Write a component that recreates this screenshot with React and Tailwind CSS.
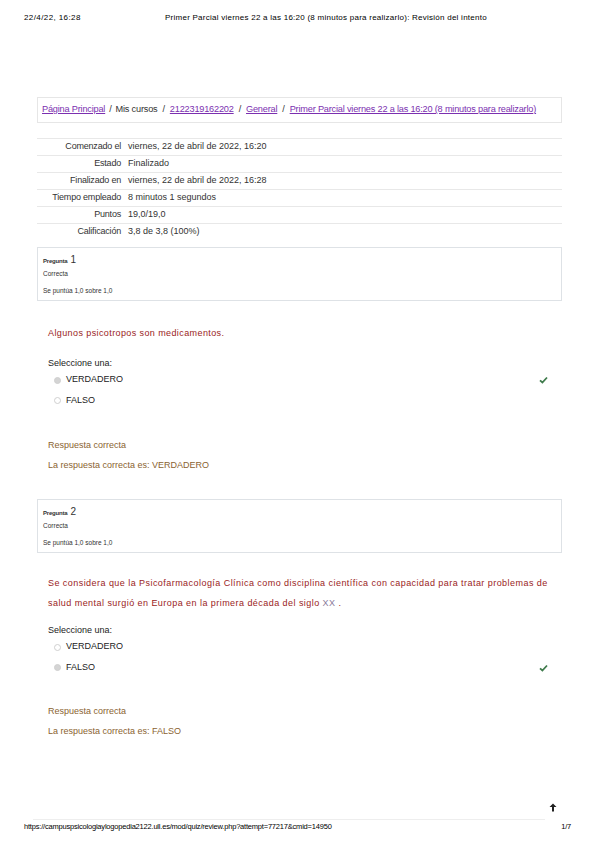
const font = { fontFamily: '"Liberation Sans", Arial, sans-serif' };

function InfoBox({ num }) {
  return (
    <div className="mx-[37px] w-[525px] h-[54px] border border-[#dee2e6] px-[5px] pt-[4px] text-[#333]">
      <div className="flex items-baseline h-[14px]">
        <span className="text-[6px] font-bold tracking-[-0.2px]">Pregunta</span>
        <span className="text-[10px] ml-[3px]">{num}</span>
      </div>
      <div className="text-[6.5px] h-[15px] leading-[15px]">Correcta</div>
      <div className="text-[6.5px] mt-[3px] h-[14px] leading-[14px]">Se puntúa 1,0 sobre 1,0</div>
    </div>
  );
}

function Check() {
  return (
    <svg width="9" height="8" viewBox="0 0 9 8" className="absolute left-[485px]">
      <path d="M1 4.3 L3.4 6.5 L8 1.5" stroke="#3f7b4c" strokeWidth="1.8" fill="none" />
    </svg>
  );
}

function Radio({ checked }) {
  return (
    <span
      className={
        "inline-block w-[7px] h-[7px] rounded-full border border-[#d0d0d0] mr-[5px] " +
        (checked ? "bg-[#d4d4d4]" : "bg-white")
      }
    />
  );
}

function Options({ correct }) {
  return (
    <div className="ml-[48px] text-[9px] text-[#222]">
      <div className="h-[14px] leading-[14px]">Seleccione una:</div>
      <div className="relative flex items-center h-[20px] ml-[6px] w-[514px]">
        <Radio checked={correct === "V"} />
        <span>VERDADERO</span>
        {correct === "V" && <Check />}
      </div>
      <div className="relative flex items-center h-[21px] ml-[6px] w-[514px]">
        <Radio checked={correct === "F"} />
        <span>FALSO</span>
        {correct === "F" && <Check />}
      </div>
    </div>
  );
}

function Feedback({ answer }) {
  return (
    <div className="ml-[48px] text-[9px] text-[#8a6330]">
      <div className="h-[20px] leading-[20px]">Respuesta correcta</div>
      <div className="h-[20px] leading-[20px]">La respuesta correcta es: {answer}</div>
    </div>
  );
}

const rows = [
  ["Comenzado el", "viernes, 22 de abril de 2022, 16:20"],
  ["Estado", "Finalizado"],
  ["Finalizado en", "viernes, 22 de abril de 2022, 16:28"],
  ["Tiempo empleado", "8 minutos 1 segundos"],
  ["Puntos", "19,0/19,0"],
  ["Calificación", "3,8 de 3,8 (100%)"],
];

export default function App() {
  return (
    <div className="relative w-[599px] h-[848px] bg-white overflow-hidden" style={font}>
      {/* print header */}
      <div className="flex items-center h-[12px] mt-[12px] text-[8px] text-black whitespace-nowrap">
        <span className="ml-[24px] w-[141px] tracking-[0.4px]">22/4/22, 16:28</span>
        <span className="tracking-[0.25px]">Primer Parcial viernes 22 a las 16:20 (8 minutos para realizarlo): Revisión del intento</span>
      </div>

      {/* breadcrumb */}
      <div className="mt-[73px] mx-[37px] w-[525px] h-[26px] border border-[#e6e6e6] flex items-center px-[4px] text-[9.2px] text-[#333] tracking-[-0.2px] whitespace-nowrap">
        <a className="text-[#7b2fb0] underline">Página Principal</a>
        <span className="mx-[4px]">/</span>
        <span>Mis cursos</span>
        <span className="mx-[5px]">/</span>
        <a className="text-[#7b2fb0] underline">2122319162202</a>
        <span className="mx-[5px]">/</span>
        <a className="text-[#7b2fb0] underline">General</a>
        <span className="mx-[5px]">/</span>
        <a className="text-[#7b2fb0] underline">Primer Parcial viernes 22 a las 16:20 (8 minutos para realizarlo)</a>
      </div>

      {/* summary table */}
      <div className="mt-[15px] mx-[37px] w-[525px] text-[9px] text-[#333]">
        {rows.map(([k, v]) => (
          <div key={k} className="flex h-[17px] items-center border-t border-[#e8e8e8]">
            <div className="w-[84px] text-right tracking-[-0.2px]">{k}</div>
            <div className="ml-[7px]">{v}</div>
          </div>
        ))}
      </div>

      <div className="mt-[7px]">
        <InfoBox num="1" />
      </div>

      <div className="ml-[48px] mt-[25px] h-[14px] leading-[14px] text-[9px] text-[#9a1c1c] tracking-[0.4px]">
        Algunos psicotropos son medicamentos.
      </div>

      <div className="mt-[16px]">
        <Options correct="V" />
      </div>

      <div className="mt-[24px]">
        <Feedback answer="VERDADERO" />
      </div>

      <div className="mt-[24px]">
        <InfoBox num="2" />
      </div>

      <div className="ml-[48px] mt-[20px] w-[505px] text-[9px] leading-[20px] text-[#9a1c1c] tracking-[0.45px]">
        Se considera que la Psicofarmacología Clínica como disciplina científica con capacidad para tratar problemas de salud mental surgió en Europa en la primera década del siglo <span className="text-[#8a7a9a]">XX</span> .
      </div>

      <div className="mt-[10px]">
        <Options correct="F" />
      </div>

      <div className="mt-[23px]">
        <Feedback answer="FALSO" />
      </div>

      {/* back to top arrow */}
      <svg width="8" height="9" viewBox="0 0 8 9" className="absolute left-[549px] top-[803px]">
        <path d="M4 0.5 L7.5 4 L5 4 L5 8.5 L3 8.5 L3 4 L0.5 4 Z" fill="#222" />
      </svg>

      {/* print footer */}
      <div className="absolute left-[33px] top-[819px] w-[512px] border-t border-[#eeeeee]" />
      <div className="absolute left-0 top-[821px] w-[599px] flex items-center h-[12px] text-[7.5px] text-black tracking-[-0.2px] whitespace-nowrap">
        <span className="ml-[24px]">https://campuspsicologiaylogopedia2122.ull.es/mod/quiz/review.php?attempt=77217&amp;cmid=14950</span>
        <span className="ml-auto mr-[28px]">1/7</span>
      </div>
    </div>
  );
}
